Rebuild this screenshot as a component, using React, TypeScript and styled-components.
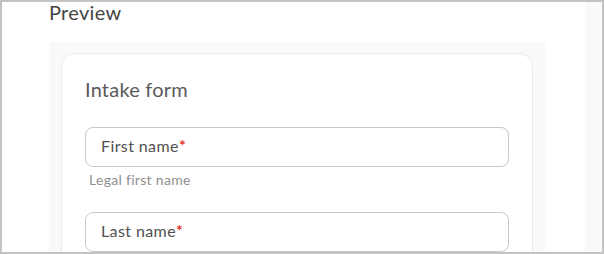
import React from 'react';
import styled, { createGlobalStyle } from 'styled-components';

const GlobalStyle = createGlobalStyle`
  html, body {
    margin: 0;
    padding: 0;
    background: #ffffff;
  }
  * {
    box-sizing: border-box;
  }
`;

const Frame = styled.div`
  width: 604px;
  height: 254px;
  border: 2px solid #c3c3c3;
  display: flex;
  overflow: hidden;
  font-family: Lato, 'Liberation Sans', sans-serif;
  background: #ffffff;
`;

const Main = styled.main`
  flex: 1;
  padding: 0 40px 0 47px;
  display: flex;
  flex-direction: column;
`;

const ScrollTrack = styled.div`
  width: 17px;
  background: #f9f9f9;
`;

const Heading = styled.h2`
  margin: 0 0 20px;
  font-size: 20px;
  line-height: 20px;
  font-weight: 400;
  letter-spacing: 0.3px;
  color: #444444;
`;

const PreviewPanel = styled.section`
  background: #f9f9f9;
  padding: 11px 12px 0;
  flex: 1;
`;

const Card = styled.div`
  background: #ffffff;
  border: 1px solid #ebebeb;
  border-bottom: none;
  border-radius: 14px 14px 0 0;
  padding: 23px 23px 0;
  height: 100%;
`;

const FormTitle = styled.h3`
  margin: 0 0 26px;
  font-size: 20px;
  line-height: 24px;
  font-weight: 400;
  letter-spacing: 0.2px;
  color: #5a5a5a;
`;

const Field = styled.div<{ $gap?: number }>`
  display: flex;
  flex-direction: column;
  margin-bottom: ${(p) => p.$gap ?? 0}px;
`;

const InputBox = styled.div`
  height: 40px;
  border: 1px solid #c9c9c9;
  border-radius: 8px;
  padding: 0 15px 3px;
  display: flex;
  align-items: center;
  font-size: 16px;
  letter-spacing: 0.4px;
  color: #505050;
`;

const Required = styled.span`
  color: #e5321f;
  font-weight: 700;
  position: relative;
  top: -1px;
`;

const Helper = styled.div`
  margin: 3px 0 0 4px;
  font-size: 14px;
  line-height: 19px;
  letter-spacing: 0.3px;
  color: #8f8f8f;
`;

type FieldDef = { label: string; helper?: string };

const fields: FieldDef[] = [
  { label: 'First name', helper: 'Legal first name' },
  { label: 'Last name' },
];

export default function App() {
  return (
    <>
      <GlobalStyle />
      <Frame>
        <Main>
          <Heading>Preview</Heading>
          <PreviewPanel>
            <Card>
              <FormTitle>Intake form</FormTitle>
              {fields.map((f) => (
                <Field key={f.label} $gap={23}>
                  <InputBox>
                    {f.label}
                    <Required>*</Required>
                  </InputBox>
                  {f.helper && <Helper>{f.helper}</Helper>}
                </Field>
              ))}
            </Card>
          </PreviewPanel>
        </Main>
        <ScrollTrack />
      </Frame>
    </>
  );
}
